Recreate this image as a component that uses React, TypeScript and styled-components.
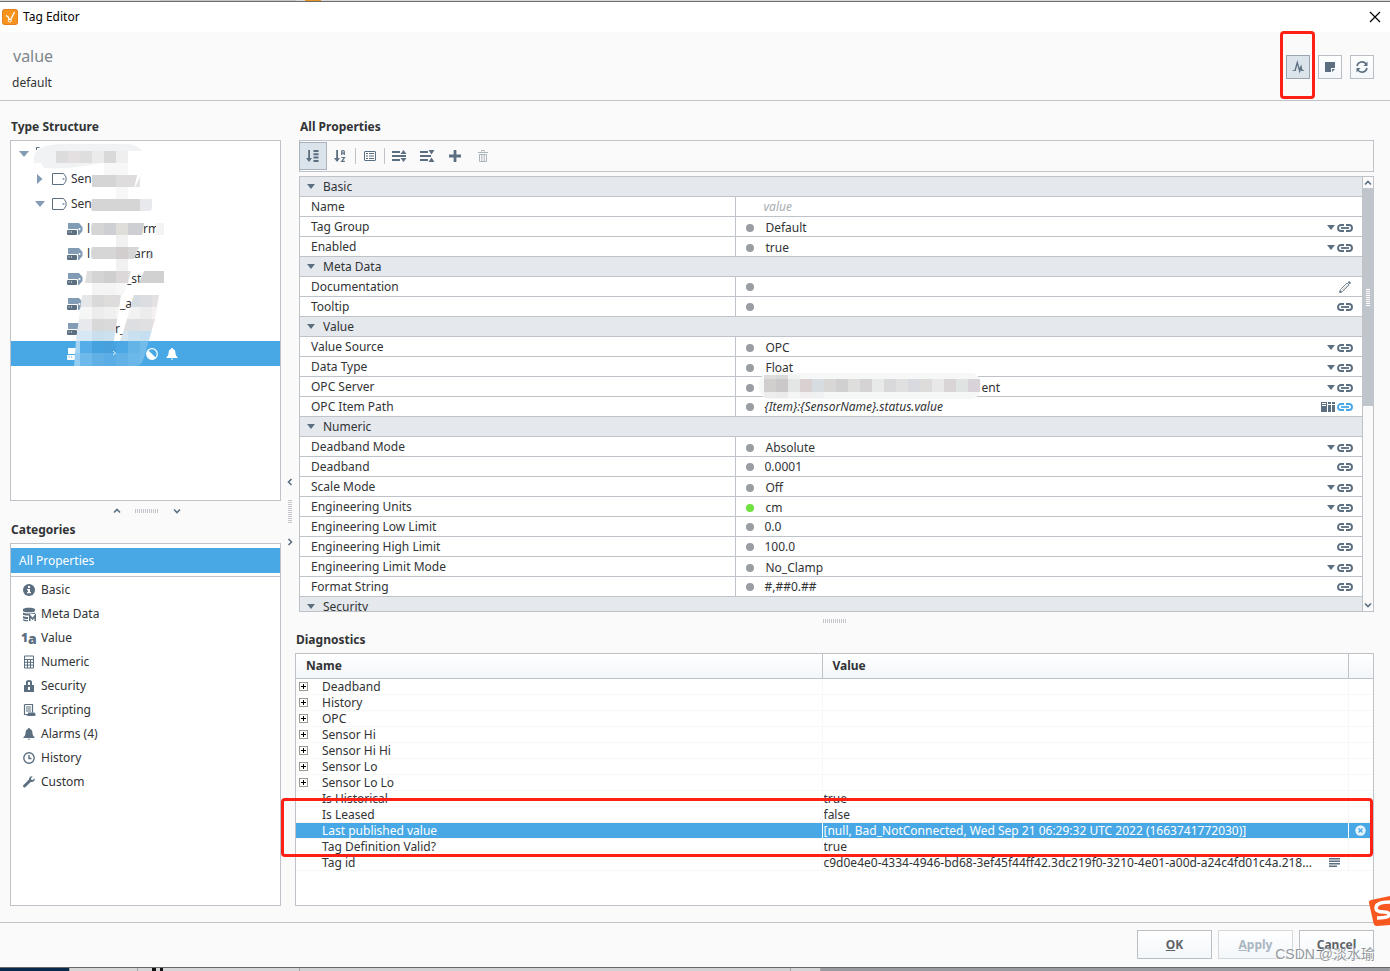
import React from "react";
import styled, { createGlobalStyle, css } from "styled-components";

const c = {
  line: "#bdc3c9",
  slate: "#5b6f80",
  steel: "#839cb5",
  blue: "#48a8e6",
  text: "#313335",
  group: "#e5e9ee",
  page: "#fafafa",
  red: "#ff2015",
};

const GlobalStyle = createGlobalStyle`
  * { box-sizing: border-box; }
  body { margin: 0; background: ${c.page}; color: ${c.text}; font: 12px/16px "Noto Sans", "Noto Sans CJK SC", sans-serif; }
  button, input, select { font: inherit; color: inherit; }
  svg { display: block; flex: none; }
`;

/* ---------- window frame ---------- */

const Window = styled.div`
  position: relative;
  display: flex;
  flex-direction: column;
  min-height: 100vh;
  overflow: hidden;
`;

const BackdropTop = styled.div`
  height: 2px;
  border-bottom: 1px solid #6d6d6d;
  background: linear-gradient(90deg, #d9d9d6 0 160px, #c5c6cc 160px 296px, #d9d9d6 296px 305px, #e39420 305px 321px, #d9d9d9 321px);
`;

const BackdropBottom = styled.div`
  display: flex;
  height: 4px;
  border-top: 1px solid #66676a;
  overflow: hidden;
`;

const BackdropPart = styled.div<{ $w?: number; $bg: string }>`
  ${(p) => (p.$w ? css`width: ${p.$w}px;` : css`flex: 1;`)}
  background: ${(p) => p.$bg};
  border-right: 1px solid #a5a5a5;
`;

const TitleBar = styled.header`
  display: flex;
  align-items: center;
  gap: 5px;
  height: 30px;
  padding: 0 9px 0 2px;
  background: #fff;
  color: #000;
`;

const WindowTitle = styled.span`
  flex: 1;
`;

const PlainButton = styled.button`
  display: flex;
  align-items: center;
  justify-content: center;
  padding: 0;
  border: 0;
  background: none;
`;

const TagHeader = styled.section`
  display: flex;
  align-items: center;
  justify-content: space-between;
  height: 69px;
  padding: 2px 16px 0 12px;
  border-bottom: 1px solid ${c.line};
`;

const TagName = styled.h1`
  margin: 0 0 7px;
  padding-left: 1px;
  font-size: 16px;
  line-height: 24px;
  font-weight: 400;
  color: #7f868c;
`;

const TagProvider = styled.div`
  line-height: 16px;
`;

const HeaderActions = styled.div`
  display: flex;
  gap: 8px;
`;

const HeaderButton = styled(PlainButton)<{ $on?: boolean }>`
  width: 24px;
  height: 24px;
  border: 1px solid ${(p) => (p.$on ? "#9aa5af" : "#b9bfc4")};
  background: ${(p) => (p.$on ? "#dbe3eb" : "linear-gradient(#fff, #f3f7fa)")};
`;

const Marked = styled.div`
  position: relative;
`;

const Mark = styled.div<{ $inset: string; $h?: number }>`
  position: absolute;
  inset: ${(p) => p.$inset};
  ${(p) => p.$h && css`height: ${p.$h}px;`}
  border: 3px solid ${c.red};
  border-radius: 4px;
  pointer-events: none;
  z-index: 3;
`;

/* ---------- body layout ---------- */

const Body = styled.main`
  flex: 1;
  display: flex;
  padding: 16px 16px 16px 10px;
  border-bottom: 1px solid ${c.line};
`;

const SideColumn = styled.aside`
  display: flex;
  flex-direction: column;
  width: 271px;
`;

const MainColumn = styled.section`
  flex: 1;
  min-width: 0;
  display: flex;
  flex-direction: column;
`;

const Heading = styled.h2`
  margin: 0 0 3px;
  padding-left: 1px;
  font-size: 12px;
  line-height: 20px;
  font-weight: 700;
`;

const Panel = styled.div<{ $grow: number }>`
  position: relative;
  flex: ${(p) => p.$grow} 1 0;
  min-height: 0;
  border: 1px solid ${c.line};
  background: #fff;
`;

const RowSplitter = styled.div<{ $h: number }>`
  display: flex;
  align-items: center;
  justify-content: center;
  gap: 14px;
  height: ${(p) => p.$h}px;
  padding-left: 3px;
`;

const MainSplitter = styled(RowSplitter)`
  padding-left: 0;
`;

const ColumnSplitter = styled.div`
  display: flex;
  flex-direction: column;
  align-items: center;
  justify-content: center;
  gap: 14px;
  width: 14px;
  padding-left: 4px;
`;

const Grip = styled.div<{ $vertical?: boolean }>`
  width: ${(p) => (p.$vertical ? 4 : 24)}px;
  height: ${(p) => (p.$vertical ? 24 : 4)}px;
  background: repeating-linear-gradient(${(p) => (p.$vertical ? "180deg" : "90deg")}, #c3c6ca 0 1px, transparent 1px 2px);
`;

/* ---------- tree ---------- */

const Tree = styled.ul`
  margin: 0;
  padding: 0;
  list-style: none;
`;

const TreeRow = styled.li<{ $depth: number; $on?: boolean }>`
  display: flex;
  align-items: center;
  height: 25px;
  padding-left: ${(p) => [7, 23, 56][p.$depth]}px;
  background: ${(p) => (p.$on ? c.blue : "transparent")};
  color: ${(p) => (p.$on ? "#fff" : c.text)};
`;

const Arrow = styled.span`
  display: flex;
  justify-content: center;
  width: 11px;
  margin-right: 7px;
`;

const Label = styled.span`
  display: flex;
  margin-left: 4px;
`;

const Gap = styled.span<{ $w: number }>`
  width: ${(p) => p.$w}px;
`;

const Smudge = styled.svg`
  position: absolute;
  left: 0;
  top: 0;
`;

/* ---------- categories ---------- */

const CategoryTop = styled.div`
  padding: 4px 0 3px;
  border-bottom: 1px solid ${c.line};
`;

const CategoryButton = styled.button<{ $on?: boolean }>`
  display: flex;
  align-items: center;
  gap: 4px;
  width: 100%;
  height: ${(p) => (p.$on ? 25 : 24)}px;
  padding: ${(p) => (p.$on ? "0 0 0 8px" : "2px 0 0 10px")};
  border: 0;
  background: ${(p) => (p.$on ? c.blue : "none")};
  color: ${(p) => (p.$on ? "#fff" : c.text)};
  text-align: left;
`;

/* ---------- properties ---------- */

const Properties = styled.section`
  flex: 496 1 0;
  min-height: 0;
  display: flex;
  flex-direction: column;
  padding-left: 4px;
`;

const Toolbar = styled.div`
  display: flex;
  align-items: center;
  height: 32px;
  margin-bottom: 4px;
  box-shadow: inset 0 0 0 1px ${c.line};
`;

const ToolButton = styled(PlainButton)<{ $on?: boolean }>`
  width: 28px;
  height: 28px;
  ${(p) => p.$on && css`border: 1px solid #a9b2ba; background: #dbe3eb;`}
`;

const Separator = styled.span`
  width: 1px;
  height: 16px;
  background: ${c.line};
`;

const PropertyPanel = styled.div`
  flex: 1;
  min-height: 0;
  display: flex;
  overflow: hidden;
  border: 1px solid ${c.line};
  background: #fff;
`;

const PropertyScroll = styled.div`
  position: relative;
  flex: 1;
  min-width: 0;
  height: 0;
`;

const PropertyTable = styled.table`
  width: 100%;
  table-layout: fixed;
  border-collapse: separate;
  border-spacing: 0;

  th, td {
    height: 20px;
    padding: 0;
    border-bottom: 1px solid ${c.line};
    font-weight: 400;
    text-align: left;
    line-height: 18px;
  }
`;

const NameColumn = styled.col`
  width: 41.1%;
`;

const GroupCell = styled.th`
  background: ${c.group};
`;

const GroupName = styled.span`
  display: flex;
  align-items: center;
  gap: 8px;
  padding-left: 7px;
`;

const NameCell = styled.th`
  && { padding-left: 11px; border-right: 1px solid ${c.line}; }
`;

const ValueLine = styled.div<{ $low?: boolean }>`
  display: flex;
  align-items: center;
  gap: 2px;
  height: 19px;
  padding: ${(p) => (p.$low ? 2 : 0)}px 9px 0 10px;
`;

const Dot = styled.span<{ $color: string }>`
  width: 8px;
  height: 8px;
  margin-right: 8px;
  border-radius: 50%;
  background: ${(p) => p.$color};
`;

const fieldBase = css`
  flex: 1;
  min-width: 0;
  height: 18px;
  padding: 0;
  border: 0;
  outline: 0;
  background: transparent;
  line-height: 18px;
`;

const TextField = styled.input<{ $italic?: boolean; $muted?: boolean }>`
  ${fieldBase}
  font-style: ${(p) => (p.$italic ? "italic" : "normal")};
  color: ${(p) => (p.$muted ? "#a9adb2" : c.text)};
  padding-left: ${(p) => (p.$muted ? 17 : 0)}px;
`;

const SelectField = styled.select`
  ${fieldBase}
  appearance: none;
  padding-left: 1px;
`;

const PixelStrip = styled.svg`
  position: relative;
  margin: -5px -3px -2px -5px;
`;

const ScrollBar = styled.div`
  display: flex;
  flex-direction: column;
  width: 11px;
  border-left: 1px solid ${c.line};
  background: #fafafa;
`;

const ScrollButton = styled(PlainButton)`
  height: 11px;
  background: #fafafa;
`;

const ScrollTrack = styled.div`
  flex: 1;
`;

const ScrollThumb = styled.div`
  display: flex;
  align-items: center;
  justify-content: center;
  height: 53%;
  background: #bfc5ca;
`;

const ThumbGrip = styled.div`
  width: 4px;
  height: 17px;
  background: repeating-linear-gradient(#fff 0 1px, transparent 1px 2px);
`;

/* ---------- diagnostics ---------- */

const DiagnosticTable = styled.table`
  width: 100%;
  table-layout: fixed;
  border-collapse: separate;
  border-spacing: 0;

  thead th {
    height: 25px;
    padding: 0 0 0 10px;
    border-bottom: 1px solid ${c.line};
    border-right: 1px solid ${c.line};
    background: linear-gradient(#fff, #f3f6f9);
    text-align: left;
  }
  thead th:last-child { border-right: 0; }
`;

const ActionColumn = styled.col`
  width: 24px;
`;

const DiagnosticCell = styled.td<{ $on?: boolean }>`
  height: 16px;
  padding: 0 0 0 1px;
  border-bottom: 1px solid #f7f7f7;
  border-right: 1px solid ${(p) => (p.$on ? "#fff" : "#f7f7f7")};
  background: ${(p) => (p.$on ? c.blue : "#fff")};
  color: ${(p) => (p.$on ? "#fff" : c.text)};
  line-height: 15px;
  white-space: nowrap;
  &:last-child { border-right: 0; }
`;

const DiagnosticLine = styled.div`
  display: flex;
  align-items: center;
  height: 15px;
`;

const ExpandSlot = styled.span`
  display: flex;
  width: 25px;
  padding-left: 2px;
`;

const ExpandButton = styled(PlainButton)`
  width: 9px;
  height: 9px;
  border: 1px solid #9b9d90;
  background: #fff;
`;

const LongValue = styled.span`
  flex: 1;
  overflow: hidden;
  text-overflow: ellipsis;
`;

const IconSlot = styled.span`
  display: flex;
  justify-content: center;
  width: 27px;
`;

/* ---------- footer ---------- */

const Footer = styled.footer`
  display: flex;
  justify-content: flex-end;
  gap: 6px;
  height: 44px;
  padding: 7px 16px 0;
`;

const DialogButton = styled.button`
  width: 75px;
  height: 29px;
  padding: 0;
  border: 1px solid #b9bfc4;
  background: linear-gradient(#fff, #f3f7fa);
  color: #606468;
  font-weight: 700;
  &:disabled { color: #a9b6c1; border-color: #d5d9dd; }
`;

const Watermark = styled.div`
  position: absolute;
  right: 15px;
  bottom: 7px;
  font: 14px/20px "Liberation Sans", "Noto Sans CJK SC", sans-serif;
  color: #96999c;
  text-shadow: 1px 1px 0 #fff;
`;

const InputBadge = styled.svg`
  position: absolute;
  right: 0;
  bottom: 45px;
`;

/* ---------- icons ---------- */

const AppIcon = () => (
  <svg width="16" height="16" viewBox="0 0 16 16">
    <rect width="16" height="16" rx="3" fill="#e07f1c" />
    <rect x="1" y="1" width="14" height="14" rx="2" fill="#f7941e" />
    <path d="M12.500 3 8.500 11M4 6.500l2.200 1.500L7.500 11" fill="none" stroke="#fff" strokeWidth="1.300" />
    <circle cx="7.800" cy="11.500" r="1.500" fill="none" stroke="#fff" />
  </svg>
);

const Chevron = ({ dir }: { dir: "up" | "down" | "left" | "right" }) => {
  const d = { up: "M1 5.5 4 2.5 7 5.5", down: "M1 2.5 4 5.5 7 2.5", left: "M5.5 1 2.5 4 5.5 7", right: "M2.5 1 5.5 4 2.5 7" }[dir];
  return (
    <svg width="8" height="8" viewBox="0 0 8 8">
      <path d={d} fill="none" stroke={c.slate} strokeWidth="1.600" />
    </svg>
  );
};

const Down = ({ color = c.slate, w = 8 }: { color?: string; w?: number }) => (
  <svg width={w} height={w === 8 ? 5 : 6} viewBox="0 0 8 5" preserveAspectRatio="none">
    <path d="M0 0h8L4 5z" fill={color} />
  </svg>
);

const Right = () => (
  <svg width="6" height="10" viewBox="0 0 6 10">
    <path d="M0 0v10l5.500-5z" fill={c.steel} />
  </svg>
);

const TypeIcon = () => (
  <svg width="15" height="12" viewBox="0 0 15 12">
    <path d="M.5.5h11L14 4v4l-2.500 3.500H.5z" fill="none" stroke={c.slate} />
    <circle cx="11.500" cy="6" r="1" fill={c.steel} />
  </svg>
);

const TagIcon = ({ on }: { on?: boolean }) => (
  <svg width="16" height="12" viewBox="0 0 16 12">
    <path d="M1 0h11l3.500 4v4L12 12H1z" fill={on ? "#fff" : c.steel} />
    <circle cx="12.500" cy="6" r="1" fill={on ? c.blue : "#fff"} />
    <rect x="-1" y="6" width="12" height="8" rx="1" fill={on ? c.blue : "#fff"} />
    <rect y="7" width="10" height="5" rx="1" fill={on ? "#fff" : c.slate} />
    <path d="M1.500 8.500h1v1h-1zM4 8.500h1v1H4z" fill={on ? c.blue : "#fff"} />
  </svg>
);

const BellIcon = ({ color = c.slate }: { color?: string }) => (
  <svg width="12" height="12" viewBox="0 0 12 12">
    <path d="M6 0c.8 0 1 .6 1 1 1.600.5 2.300 1.800 2.400 3.500.1 2.400.6 3.300 2.100 4.500v1H.5V9C2 7.800 2.500 6.900 2.600 4.500 2.700 2.800 3.400 1.500 5 1c0-.4.200-1 1-1zM4.700 10.800h2.600L6 12z" fill={color} />
  </svg>
);

const HistorianIcon = () => (
  <svg width="12" height="12" viewBox="0 0 12 12">
    <circle cx="6" cy="6" r="5.300" fill="none" stroke="#fff" strokeWidth="1.200" />
    <path d="M2 2a5.700 5.700 0 0 0 8 8z" fill="#fff" />
  </svg>
);

const LinkIcon = ({ color = c.slate }: { color?: string }) => (
  <svg width="16" height="8" viewBox="0 0 16 8">
    <path d="M7 1H4a3 3 0 0 0 0 6h3M9 1h3a3 3 0 0 1 0 6H9" fill="none" stroke={color} strokeWidth="1.900" />
    <path d="M4 4h8" stroke={color} strokeWidth="1.800" />
  </svg>
);

const PencilIcon = () => (
  <svg width="16" height="12" viewBox="0 0 16 12">
    <path d="M3.500 8.500 10 2l2 2-6.500 6.500-2.500.8z" fill="none" stroke="#7e8d9a" />
    <path d="M5 9.500 11 3.500" stroke="#7e8d9a" strokeWidth=".6" />
    <path d="m10.800 1.200 1.200-1.200 2 2-1.200 1.200zM2 12l.8-2.800 2 2z" fill={c.slate} />
  </svg>
);

const BrowseIcon = () => (
  <svg width="14" height="10" viewBox="0 0 14 10" fill={c.slate}>
    <path fillRule="evenodd" d="M0 0h6v10H0zM1 1v1h4V1zM1 3v1h4V3z" />
    <path d="M7 0h3v2H7zM7 3h3v7H7zM11 0h3v2h-3zM11 3h3v7h-3z" />
  </svg>
);

const PulseIcon = () => (
  <svg width="14" height="14" viewBox="0 0 14 14">
    <path d="M.5 11 3.500 10 6.300 0 8.500 8l1.800-3.500.9 4.700L13.500 11h-3l-.5-1.500-1.300 4L6.300 5 4.700 11z" fill={c.slate} />
  </svg>
);

const NoteIcon = () => (
  <svg width="10" height="10" viewBox="0 0 10 10" fill={c.slate}>
    <path d="M0 0h10v6H6v4H0zM7 7h3L7 10z" />
  </svg>
);

const RefreshIcon = () => (
  <svg width="14" height="14" viewBox="0 0 14 14">
    <path d="M2 6a5.200 5.200 0 0 1 9-2.300M12 8a5.200 5.200 0 0 1-9 2.300" fill="none" stroke={c.slate} strokeWidth="1.600" />
    <path d="M12.500 1.500V6H8.500zM1.500 12.500V8h4z" fill={c.slate} />
  </svg>
);

const CloseIcon = () => (
  <svg width="12" height="12" viewBox="0 0 12 12">
    <path d="M1 1l10 10M11 1 1 11" stroke="#000" strokeWidth="1.200" />
  </svg>
);

const toolIcons = {
  sort: <path d="M1.200 0h1.800v8h2l-3 4-3-4h2.200zM6.500 0h5v2h-5zM6.500 3.300h5v2h-5zM6.500 6.600h5v2h-5zM6.500 10h5v2h-5z" />,
  az: (
    <>
      <path d="M1.200 0h1.800v8h2l-3 4-3-4h2.200z" />
      <path d="M6.700 5V1.500q0-1 1.300-1t1.300 1V5M6.700 3.200h2.600M6.300 7.500h3.200L6.700 11.300h3.100" fill="none" stroke={c.slate} strokeWidth="1.200" />
    </>
  ),
  list: (
    <>
      <rect x=".5" y="1.500" width="11" height="9" rx=".5" fill="none" stroke={c.slate} />
      <path d="M2 3h2v1H2zM2 5.500h2v1H2zM2 8h2v1H2zM5 3h5v1H5zM5 5.500h5v1H5zM5 8h5v1H5z" />
    </>
  ),
  expand: <path d="M-1 1h8v2h-8zM-1 5h14v2H-1zM-1 9h8v2h-8zM7.500 4 10.500 0l3 4zM7.500 8l3 4 3-4z" />,
  collapse: <path d="M-1 1h8v2h-8zM-1 5h11v2H-1zM-1 9h8v2h-8zM7.500 0h6l-3 4.500zM7.500 12l3-4.500 3 4.500z" />,
  add: <path d="M4.600 0h2.800v4.600H12v2.800H7.400V12H4.600V7.400H0V4.600h4.600z" />,
  trash: <path d="M4.500 1.500V.5h3v1M1 2.500h10M2.500 4.500h7v7h-7zM4.800 5v6M7.200 5v6" fill="none" stroke="#adb5bc" />,
};

const ToolIcon = ({ name }: { name: keyof typeof toolIcons }) => (
  <svg width="12" height="12" viewBox="0 0 12 12" overflow="visible" fill={c.slate}>{toolIcons[name]}</svg>
);

const categoryIcons: Record<string, React.ReactNode> = {
  Basic: (
    <>
      <circle cx="8" cy="6" r="6" />
      <path d="M7 2h2v2H7zM6 5h3v3h1v1.300H6V8h1V6.200H6z" fill="#fff" />
    </>
  ),
  "Meta Data": (
    <>
      <path d="M2 1.500C2-.8 14-.8 14 1.500V3c0 1.800-12 1.800-12 0zM2 4.500c2 1.300 10 1.300 12 0V6H8v1.500c-3 0-6-.3-6-1.300zM2 8c1.200.8 3 1 5 1v2c-2.500 0-5-.3-5-1.300zM2 11c1.200.8 3 1 5 1v1.300c-3 0-5-.4-5-1.300z" />
      <path d="M8.800 13V7.500L11.500 11l2.700-3.500V13" fill="none" stroke={c.slate} strokeWidth="1.600" />
    </>
  ),
  Numeric: (
    <path d="M3.500 0h9v12h-9zM3.500 3.500h9M3.500 6.300h9M3.500 9.100h9M6.500 3.500V12M9.500 3.500V12" fill="none" stroke={c.slate} />
  ),
  Security: <path fillRule="evenodd" d="M5 5V2q0-2 3-2t3 2v3h2v7H3V5zM7 5h2V2H7zM7 7v3h2V7z" />,
  Scripting: (
    <>
      <path d="M3.500.5h8v8M3.500.5v10h4M5 3h5M5 5h5M5 7h5" fill="none" stroke={c.slate} strokeWidth="1.200" />
      <path d="M7 8.500h6.500l1 1.500v1.500L13 12H5q2-.5 2-2z" />
    </>
  ),
  History: (
    <path d="M8 .8a5.200 5.200 0 1 0 0 10.400A5.200 5.200 0 0 0 8 .8zM8 3v3.500h2.500" fill="none" stroke={c.slate} strokeWidth="1.400" />
  ),
  Custom: <path d="M13.800 2.200 11.800 4 10.300 3.700 10 2.300 11.800.3C9.800-.3 7.800 1 8 3.500L2.300 9.300c-1 1.200.7 3 2 2L9.700 6c2.600.4 4.600-1.300 4.100-3.800z" />,
};

const OneA = styled.span`
  display: flex;
  align-items: center;
  width: 16px;
  height: 12px;
  color: ${c.slate};
  font: 900 12px/12px "Noto Sans", sans-serif;
  sub { font-size: 14px; line-height: 12px; padding-top: 2px; }
`;

const CategoryIcon = ({ name }: { name: string }) => {
  if (name === "Value") return <OneA aria-hidden>1<sub>a</sub></OneA>;
  if (name.startsWith("Alarms"))
    return (
      <svg width="16" height="12" viewBox="-2 0 16 12"><BellIcon /></svg>
    );
  return (
    <svg width="16" height="12" viewBox="0 0 16 12" overflow="visible" fill={c.slate}>{categoryIcons[name]}</svg>
  );
};

/* ---------- data ---------- */

type Kind = "name" | "select" | "text" | "note" | "path" | "server";
type Prop = { name: string; value?: string; kind?: Kind; dot?: string; group?: boolean };

const properties: Prop[] = [
  { name: "Basic", group: true },
  { name: "Name", value: "value", kind: "name" },
  { name: "Tag Group", value: "Default", kind: "select" },
  { name: "Enabled", value: "true", kind: "select" },
  { name: "Meta Data", group: true },
  { name: "Documentation", value: "", kind: "note" },
  { name: "Tooltip", value: "", kind: "text" },
  { name: "Value", group: true },
  { name: "Value Source", value: "OPC", kind: "select" },
  { name: "Data Type", value: "Float", kind: "select" },
  { name: "OPC Server", value: "ent", kind: "server" },
  { name: "OPC Item Path", value: "{Item}:{SensorName}.status.value", kind: "path" },
  { name: "Numeric", group: true },
  { name: "Deadband Mode", value: "Absolute", kind: "select" },
  { name: "Deadband", value: "0.0001", kind: "text" },
  { name: "Scale Mode", value: "Off", kind: "select" },
  { name: "Engineering Units", value: "cm", kind: "select", dot: "#70e23e" },
  { name: "Engineering Low Limit", value: "0.0", kind: "text" },
  { name: "Engineering High Limit", value: "100.0", kind: "text" },
  { name: "Engineering Limit Mode", value: "No_Clamp", kind: "select" },
  { name: "Format String", value: "#,##0.##", kind: "text" },
  { name: "Security", group: true },
];

const categories = ["Basic", "Meta Data", "Value", "Numeric", "Security", "Scripting", "Alarms (4)", "History", "Custom"];

const diagnostics: { name: string; value?: string; open?: boolean; on?: boolean; long?: boolean }[] = [
  { name: "Deadband", open: true },
  { name: "History", open: true },
  { name: "OPC", open: true },
  { name: "Sensor Hi", open: true },
  { name: "Sensor Hi Hi", open: true },
  { name: "Sensor Lo", open: true },
  { name: "Sensor Lo Lo", open: true },
  { name: "Is Historical", value: "true" },
  { name: "Is Leased", value: "false" },
  { name: "Last published value", value: "[null, Bad_NotConnected, Wed Sep 21 06:29:32 UTC 2022 (1663741772030)]", on: true },
  { name: "Tag Definition Valid?", value: "true" },
  { name: "Tag id", value: "c9d0e4e0-4334-4946-bd68-3ef45f44ff42.3dc219f0-3210-4e01-a00d-a24c4fd01c4a.218...", long: true },
];

/* ---------- pixelated areas ---------- */

const Cells = ({ x, y, h = 12, colors }: { x: number; y: number; h?: number; colors: string[] }) => (
  <>
    {colors.map((fill, i) => (
      <rect key={i} x={x + i * 12} y={y} width="12" height={h} fill={fill} />
    ))}
  </>
);

const TreeSmudge = () => (
  <Smudge width="160" height="228" viewBox="11 141 160 228" aria-hidden>
    <defs>
      <clipPath id="blob"><path d="M34 158q0-14 30-14h64q10 1 14 7h-14v12h-28q-30 7-56 5l-3-5h-7z" /></clipPath>
      <clipPath id="band">
        <path d="M82 295h39l-3 20-5 31q5 0 9-10l12-41h25l-4 24-10 35q-3 12-8 12H74l2-25z" />
      </clipPath>
      <clipPath id="slant"><path d="M87 271h44l-3 12-5 12H83z" /></clipPath>
    </defs>
    <path d="M36.500 150v-2.500h3" fill="none" stroke={c.slate} />
    <g clipPath="url(#blob)">
      <rect x="34" y="143" width="110" height="26" fill="#f1f2f3" />
      <Cells x={56} y={151} colors={["#dcdcdc", "#e4dfe0", "#dedede", "#ebebeb", "#d9d9d9", "#efefef"]} />
    </g>
    <path d="M104 163h24v12h-24zM116 187h12v12h-12z" fill="#f7f7f8" />
    <path d="M92 175h45l-3 12H92z" fill="#d5d5d6" />
    <path d="M116 175h21l-3 12h-18z" fill="#dedcdd" />
    <path d="M140 177v10h-5z" fill="#e4e4e5" />
    <path d="M92 199h48v12H92q-2-6 0-12z" fill="#d6d5d6" />
    <path d="M140 199h12v8q0 4-3 4h-9z" fill="#e8e9ec" />
    <path d="M92 223h52l-2 12H92q-2-6 0-12z" fill="#d5d5d6" />
    <path d="M104 223h12v12h-12zM128 223h16l-2 12h-14z" fill="#cecfd2" />
    <path d="M116 223h12v12h-12z" fill="#e0deda" />
    <path d="M156 223h8v12h-8z" fill="#f3f3f3" />
    <path d="M92 247h47l-5 12H92q-2-6 0-12z" fill="#d6d6d7" />
    <path d="M116 247h12v12h-12zM151 247v12h-2z" fill="#d3cece" />
    <path d="M116 235h12v12h-12zM116 259h12v12h-12z" fill="#f1f1f2" />
    <g clipPath="url(#slant)">
      <Cells x={80} y={271} colors={["#dedede", "#d4d4d5", "#cfcfd0", "#dcd8d9", "#dfdfe0"]} />
      <Cells x={80} y={283} colors={["#fff", "#f4f4f5", "#f4f4f4", "#f7f7f7", "#fff"]} />
    </g>
    <path d="M144 271h20v12h-25z" fill="#d2d1d2" />
    <g clipPath="url(#band)">
      <Cells x={68} y={295} colors={["#e9eaeb", "#e6e7e8", "#d9d9da", "#dfdddc", "#dedcdc", "#d5dce2", "#dcdde0", "#e5e2e4"]} />
      <Cells x={68} y={307} colors={["#f2f3f4", "#f5f6f6", "#ececed", "#f0f0f0", "#f4f4f5", "#f2f2f2", "#ececed", "#f5f1f1"]} />
      <Cells x={68} y={319} colors={["#e3e7ed", "#e8e9ed", "#d8d8d9", "#dbdadb", "#dedee0", "#dddee2", "#e0dfe1", "#e6e0e1"]} />
      <Cells x={68} y={331} h={10} colors={["#d7e8f4", "#d6e8f4", "#c9dfed", "#cbe1ef", "#d5e6f0", "#c9e0f1", "#c5dff0", "#c9e2f4"]} />
      <Cells x={68} y={341} colors={["#a6d5f3", "#54ade8", "#46a2df", "#479fdb", "#4ca8e4", "#65b4e8", "#70bbea", "#8bc8ee"]} />
      <Cells x={68} y={353} h={13} colors={["#93ccf0", "#6db9ea", "#60b0e5", "#5aade5", "#62b2e7", "#6bb7e9", "#72bbea", "#7bc0ec"]} />
    </g>
    <path d="M113 351l2.500 2-2.500 2" fill="none" stroke="#e5f3fc" />
  </Smudge>
);

const stripColors = ["#d0cfce", "#cac8c8", "#e4e6e5", "#d9d1d1", "#d6dcdf", "#d9d7d6", "#d1d0d1", "#dededd", "#d5d3d3", "#e8eae9", "#d9d8da", "#e1e0e1", "#d9dadf", "#dddcdb", "#e8e8e9", "#d9d5d6", "#dfe3e1", "#d9d3d9"];

const ServerStrip = () => (
  <PixelStrip width="222" height="26" viewBox="0 0 222 26" aria-hidden>
    <defs><clipPath id="strip"><rect width="222" height="26" rx="11" /></clipPath></defs>
    <g clipPath="url(#strip)">
      <rect width="222" height="26" fill="#f6f7f7" />
      <Cells x={5} y={2} h={4} colors={["#dedede", "#d8d9db", "#f1f3f3"]} />
      <Cells x={5} y={6} h={13} colors={stripColors} />
      <Cells x={5} y={19} h={6} colors={["#ededed", "#ebebeb", "#f4f5f5", "#f1eff0", "#eff1f2"]} />
    </g>
  </PixelStrip>
);

/* ---------- pieces ---------- */

const leaves: [string, number, string][] = [
  ["l", 53, "rm"],
  ["l", 44, "arn"],
  ["", 39, "_st"],
  ["", 33, "_al"],
  ["", 28, "r_"],
];

const TagTree = () => (
  <Panel $grow={361}>
    <Tree>
      <TreeRow $depth={0}><Arrow><Down color={c.steel} w={10} /></Arrow></TreeRow>
      <TreeRow $depth={1}><Arrow><Right /></Arrow><TypeIcon /><Label>Sen</Label></TreeRow>
      <TreeRow $depth={1}><Arrow><Down color={c.steel} w={10} /></Arrow><TypeIcon /><Label>Sen</Label></TreeRow>
      {leaves.map(([start, gap, end]) => (
        <TreeRow key={end} $depth={2}>
          <TagIcon /><Label>{start}<Gap $w={gap} />{end}</Label>
        </TreeRow>
      ))}
      <TreeRow $depth={2} $on>
        <TagIcon on /><Gap $w={63} /><HistorianIcon /><Gap $w={8} /><BellIcon color="#fff" />
      </TreeRow>
    </Tree>
    <TreeSmudge />
  </Panel>
);

const PropertyValue = ({ p }: { p: Prop }) => {
  const hasList = p.kind === "select" || p.kind === "server";
  return (
    <ValueLine $low={hasList}>
      {p.kind !== "name" && <Dot $color={p.dot ?? "#9a9ea2"} />}
      {p.kind === "server" && <ServerStrip />}
      {hasList ? (
        <SelectField aria-label={p.name} defaultValue={p.value}><option>{p.value}</option></SelectField>
      ) : (
        <TextField aria-label={p.name} defaultValue={p.value} $italic={p.kind === "name" || p.kind === "path"} $muted={p.kind === "name"} />
      )}
      {hasList && <Down />}
      {p.kind === "path" && <PlainButton aria-label="Browse"><BrowseIcon /></PlainButton>}
      {p.kind === "note" && <PlainButton aria-label="Edit"><PencilIcon /></PlainButton>}
      {p.kind !== "note" && p.kind !== "name" && (
        <PlainButton aria-label="Bind"><LinkIcon color={p.kind === "path" ? c.blue : c.slate} /></PlainButton>
      )}
    </ValueLine>
  );
};

const PropertyGrid = () => (
  <PropertyPanel>
    <PropertyScroll>
      <PropertyTable>
        <colgroup><NameColumn /><col /></colgroup>
        <tbody>
          {properties.map((p) =>
            p.group ? (
              <tr key={p.name + "-group"}>
                <GroupCell colSpan={2} scope="rowgroup"><GroupName><Down />{p.name}</GroupName></GroupCell>
              </tr>
            ) : (
              <tr key={p.name}>
                <NameCell scope="row">{p.name}</NameCell>
                <td><PropertyValue p={p} /></td>
              </tr>
            )
          )}
        </tbody>
      </PropertyTable>
    </PropertyScroll>
    <ScrollBar>
      <ScrollButton aria-label="Scroll up"><Chevron dir="up" /></ScrollButton>
      <ScrollTrack><ScrollThumb><ThumbGrip /></ScrollThumb></ScrollTrack>
      <ScrollButton aria-label="Scroll down"><Chevron dir="down" /></ScrollButton>
    </ScrollBar>
  </PropertyPanel>
);

const Diagnostics = () => (
  <Panel $grow={252}>
    <DiagnosticTable>
      <colgroup><col /><col /><ActionColumn /></colgroup>
      <thead><tr><th>Name</th><th>Value</th><th aria-label="Actions" /></tr></thead>
      <tbody>
        {diagnostics.map((d) => (
          <tr key={d.name}>
            <DiagnosticCell $on={d.on}>
              <DiagnosticLine>
                <ExpandSlot>
                  {d.open && (
                    <ExpandButton aria-label={`Expand ${d.name}`}>
                      <svg width="5" height="5" viewBox="0 0 5 5"><path d="M2 0h1v5H2zM0 2h5v1H0z" /></svg>
                    </ExpandButton>
                  )}
                </ExpandSlot>
                {d.name}
              </DiagnosticLine>
            </DiagnosticCell>
            <DiagnosticCell $on={d.on}>
              <DiagnosticLine>
                <LongValue>{d.value}</LongValue>
                {d.long && (
                  <IconSlot>
                    <svg width="11" height="9" viewBox="0 0 11 9"><path d="M0 0h11v1.500H0zM0 2.500h11V4H0zM0 5h11v1.500H0zM0 7.500h8V9H0z" fill={c.slate} /></svg>
                  </IconSlot>
                )}
              </DiagnosticLine>
            </DiagnosticCell>
            <DiagnosticCell $on={d.on}>
              {d.on && (
                <PlainButton aria-label="Clear">
                  <svg width="21" height="11" viewBox="0 0 21 11">
                    <circle cx="10.500" cy="5.500" r="5.200" fill="#e6f3fc" />
                    <path d="m8.500 3.500 4 4m0-4-4 4" stroke={c.blue} strokeWidth="1.400" />
                  </svg>
                </PlainButton>
              )}
            </DiagnosticCell>
          </tr>
        ))}
      </tbody>
    </DiagnosticTable>
    <Mark $inset="144px 0 auto -15px" $h={59} />
  </Panel>
);

export default function App() {
  return (
    <Window>
      <GlobalStyle />
      <BackdropTop />
      <TitleBar>
        <AppIcon />
        <WindowTitle>Tag Editor</WindowTitle>
        <PlainButton aria-label="Close"><CloseIcon /></PlainButton>
      </TitleBar>
      <TagHeader>
        <div>
          <TagName>value</TagName>
          <TagProvider>default</TagProvider>
        </div>
        <HeaderActions>
          <Marked>
            <HeaderButton $on aria-label="Diagnostics"><PulseIcon /></HeaderButton>
            <Mark $inset="-24px -5px -20px -6px" />
          </Marked>
          <HeaderButton aria-label="Notes"><NoteIcon /></HeaderButton>
          <HeaderButton aria-label="Refresh"><RefreshIcon /></HeaderButton>
        </HeaderActions>
      </TagHeader>
      <Body>
        <SideColumn>
          <Heading>Type Structure</Heading>
          <TagTree />
          <RowSplitter $h={19}><Chevron dir="up" /><Grip /><Chevron dir="down" /></RowSplitter>
          <Heading>Categories</Heading>
          <Panel $grow={363}>
            <CategoryTop><CategoryButton $on>All Properties</CategoryButton></CategoryTop>
            {categories.map((name) => (
              <CategoryButton key={name}><CategoryIcon name={name} />{name}</CategoryButton>
            ))}
          </Panel>
        </SideColumn>
        <ColumnSplitter><Chevron dir="left" /><Grip $vertical /><Chevron dir="right" /></ColumnSplitter>
        <MainColumn>
          <Properties>
            <Heading>All Properties</Heading>
            <Toolbar>
              <ToolButton $on aria-label="Sort by category"><ToolIcon name="sort" /></ToolButton>
              <ToolButton aria-label="Sort by name"><ToolIcon name="az" /></ToolButton>
              <Separator />
              <ToolButton aria-label="Show description"><ToolIcon name="list" /></ToolButton>
              <Separator />
              <ToolButton aria-label="Expand all"><ToolIcon name="expand" /></ToolButton>
              <ToolButton aria-label="Collapse all"><ToolIcon name="collapse" /></ToolButton>
              <ToolButton aria-label="Add property"><ToolIcon name="add" /></ToolButton>
              <ToolButton aria-label="Delete property"><ToolIcon name="trash" /></ToolButton>
            </Toolbar>
            <PropertyGrid />
          </Properties>
          <MainSplitter $h={18}><Grip /></MainSplitter>
          <Heading>Diagnostics</Heading>
          <Diagnostics />
        </MainColumn>
      </Body>
      <Footer>
        <DialogButton><u>O</u>K</DialogButton>
        <DialogButton disabled><u>A</u>pply</DialogButton>
        <DialogButton><u>C</u>ancel</DialogButton>
      </Footer>
      <BackdropBottom>
        <BackdropPart $w={70} $bg="#08294a" />
        <BackdropPart $w={68} $bg="#d6d6d6" />
        <BackdropPart $w={162} $bg="linear-gradient(90deg, #d6d6d8 14px, #111 14px 18px, #d6d6d8 18px 22px, #111 22px 25px, #d6d6d8 25px)" />
        <BackdropPart $w={491} $bg="#d2d2d4" />
        <BackdropPart $w={30} $bg="#d6d6d8" />
        <BackdropPart $bg="#9a9ba0" />
      </BackdropBottom>
      <InputBadge width="21" height="30" viewBox="0 0 21 30">
        <path d="M0 7q-.5-2 2-3L21 0v29L8 30q-3 0-3.500-3z" fill="#f8581f" />
        <path d="M21 6Q7 6 7 12q0 4 8 4 5 0 5 3t-12 3" fill="none" stroke="#fff" strokeWidth="3.500" />
      </InputBadge>
      <Watermark>CSDN @淡水瑜</Watermark>
    </Window>
  );
}
